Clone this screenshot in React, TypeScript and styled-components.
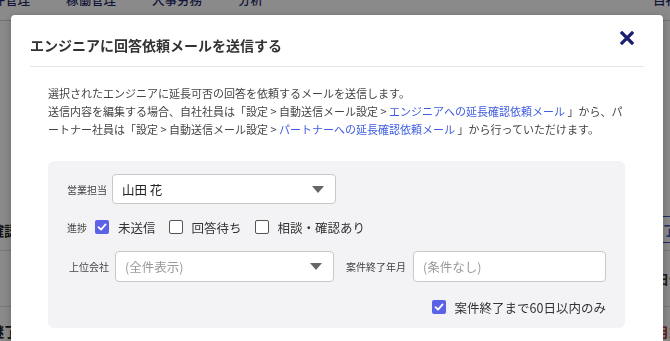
import React from "react";
import styled, { createGlobalStyle } from "styled-components";

const Global = createGlobalStyle`
  html, body { margin: 0; padding: 0; }
  body {
    width: 670px; height: 341px; overflow: hidden; background: #fff;
    font-family: "Noto Sans CJK JP", "Noto Sans", sans-serif; color: #333;
  }
`;

const Page = styled.div`
  width: 670px; height: 341px; overflow: hidden; display: flex; flex-direction: column;
`;

const Header = styled.header`
  height: 20px; flex: none; display: flex; align-items: flex-start; gap: 36px;
  border-bottom: 1px solid #d0d0d0; overflow: hidden;
`;

const NavItem = styled.span<{ $right?: boolean }>`
  font-size: 12.5px; line-height: 14px; margin-top: -7px; color: #1f2a6b; font-weight: 500;
  white-space: nowrap;
  margin-left: ${(p) => (p.$right ? "auto" : "0")};
  margin-right: ${(p) => (p.$right ? "-8px" : "0")};
  &:first-child { margin-left: -20px; }
`;

const Content = styled.main`
  flex: 1; display: flex; flex-direction: column; padding-top: 188px;
`;

const BgRow = styled.div<{ $h: number }>`
  height: ${(p) => p.$h}px; display: flex; align-items: center; justify-content: space-between;
  border-bottom: 1px solid #e0e0e0; flex: none;
`;

const BgLeft = styled.span`
  margin-left: -10px; font-size: 14px; font-weight: 700; color: #222;
`;

const BgRight = styled.span<{ $color: string; $boxed?: boolean }>`
  margin-right: -12px; font-size: 13px; font-weight: 700; color: ${(p) => p.$color};
  padding: ${(p) => (p.$boxed ? "3px 6px" : "0")};
  border-top: ${(p) => (p.$boxed ? "1px solid #3a4fc0" : "none")};
  border-bottom: ${(p) => (p.$boxed ? "1px solid #3a4fc0" : "none")};
`;

const Overlay = styled.div`
  position: fixed; inset: 0; background: rgba(0, 0, 0, 0.46);
`;

const Modal = styled.div`
  position: fixed; top: 15px; left: 11px; width: 652px; height: 400px;
  background: #fff; border-radius: 4px; box-shadow: 0 2px 10px rgba(0,0,0,0.25);
`;

const ModalHeader = styled.div`
  margin: 0 19px; padding: 19px 0 10px; border-bottom: 1px solid #e6e6e6;
  position: relative;
`;

const Title = styled.h2`
  margin: 0; font-size: 14px; line-height: 22px; font-weight: 700; color: #333;
`;

const Close = styled.button`
  position: absolute; right: 8px; top: 14px; width: 18px; height: 18px;
  padding: 0; border: 0; background: none; display: flex; align-items: center; justify-content: center;
`;

const Body = styled.div`
  padding: 17px 38px 0 37px;
`;

const Desc = styled.p`
  margin: 0; font-size: 11px; line-height: 18px; color: #444;
`;

const Link = styled.a`
  color: #3f5ce0; text-decoration: none;
`;

const Panel = styled.div`
  margin-top: 23px; background: #f3f3f6; border-radius: 6px;
  padding: 13px 19px 11px 19px; display: flex; flex-direction: column;
`;

const Row = styled.div<{ $mt?: number; $pl?: number; $end?: boolean }>`
  display: flex; align-items: center;
  margin-top: ${(p) => p.$mt ?? 0}px; padding-left: ${(p) => p.$pl ?? 0}px;
  justify-content: ${(p) => (p.$end ? "flex-end" : "flex-start")};
`;

const Label = styled.span<{ $gap: number; $ml?: number }>`
  font-size: 10px; color: #444; margin-right: ${(p) => p.$gap}px;
  margin-left: ${(p) => p.$ml ?? 0}px; white-space: nowrap;
`;

const Field = styled.div<{ $w: number; $h: number }>`
  width: ${(p) => p.$w}px; height: ${(p) => p.$h}px; box-sizing: border-box;
  background: #fff; border: 1px solid #c8c8c8; border-radius: 4px;
  display: flex; align-items: center; justify-content: space-between;
  padding: 0 11px 0 9px; font-size: 12.5px;
`;

const Value = styled.span<{ $placeholder?: boolean }>`
  color: ${(p) => (p.$placeholder ? "#9a9a9a" : "#222")};
`;

const Caret = styled.span`
  width: 0; height: 0; border-left: 6px solid transparent; border-right: 6px solid transparent;
  border-top: 7px solid #666;
`;

const CheckGroup = styled.div`
  display: flex; align-items: center; gap: 13px; height: 20px;
`;

const CheckItem = styled.label`
  display: flex; align-items: center; gap: 9px; font-size: 12.5px; color: #333;
`;

const Box = styled.span<{ $on: boolean }>`
  width: 14px; height: 14px; box-sizing: border-box; border-radius: 2px;
  background: ${(p) => (p.$on ? "#5b62e6" : "#fff")};
  border: ${(p) => (p.$on ? "none" : "1.5px solid #555")};
  display: flex; align-items: center; justify-content: center;
`;

const Check = ({ on, label }: { on: boolean; label: string }) => (
  <CheckItem>
    <Box $on={on}>
      {on && (
        <svg width="10" height="10" viewBox="0 0 10 10">
          <path d="M1.5 5.2 L4 7.6 L8.6 2.4" fill="none" stroke="#fff" strokeWidth="1.8" strokeLinecap="round" strokeLinejoin="round" />
        </svg>
      )}
    </Box>
    {label}
  </CheckItem>
);

export default function App() {
  return (
    <>
      <Global />
      <Page>
        <Header>
          <NavItem>案件管理</NavItem>
          <NavItem>稼働管理</NavItem>
          <NavItem>人事労務</NavItem>
          <NavItem>分析</NavItem>
          <NavItem $right>自社</NavItem>
        </Header>
        <Content>
          <BgRow $h={41}>
            <BgLeft>確認中</BgLeft>
            <BgRight $color="#3a4fc0" $boxed>終了</BgRight>
          </BgRow>
          <BgRow $h={55}>
            <BgLeft />
            <BgRight $color="#333">日付</BgRight>
          </BgRow>
          <BgRow $h={48}>
            <BgLeft>継了</BgLeft>
            <BgRight $color="#c0392b">月末</BgRight>
          </BgRow>
        </Content>
      </Page>
      <Overlay />
      <Modal>
        <ModalHeader>
          <Title>エンジニアに回答依頼メールを送信する</Title>
          <Close aria-label="閉じる">
            <svg width="14" height="14" viewBox="0 0 14 14">
              <path d="M2 2 L12 12 M12 2 L2 12" stroke="#1c1f6e" strokeWidth="3.2" strokeLinecap="square" />
            </svg>
          </Close>
        </ModalHeader>
        <Body>
          <Desc>
            選択されたエンジニアに延長可否の回答を依頼するメールを送信します。
            <br />
            送信内容を編集する場合、自社社員は「設定 &gt; 自動送信メール設定 &gt; <Link>エンジニアへの延長確認依頼メール</Link> 」から、パートナー社員は「設定 &gt; 自動送信メール設定 &gt; <Link>パートナーへの延長確認依頼メール</Link> 」から行っていただけます。
          </Desc>
          <Panel>
            <Row>
              <Label $gap={5}>営業担当</Label>
              <Field $w={224} $h={30}>
                <Value>山田 花</Value>
                <Caret />
              </Field>
            </Row>
            <Row $mt={13}>
              <Label $gap={8}>進捗</Label>
              <CheckGroup>
                <Check on label="未送信" />
                <Check on={false} label="回答待ち" />
                <Check on={false} label="相談・確認あり" />
              </CheckGroup>
            </Row>
            <Row $mt={14} $pl={2}>
              <Label $gap={6}>上位会社</Label>
              <Field $w={220} $h={31}>
                <Value $placeholder>(全件表示)</Value>
                <Caret />
              </Field>
              <Label $gap={7} $ml={12}>案件終了年月</Label>
              <Field $w={194} $h={31}>
                <Value $placeholder>(条件なし)</Value>
              </Field>
            </Row>
            <Row $mt={15} $end>
              <CheckGroup>
                <Check on label="案件終了まで60日以内のみ" />
              </CheckGroup>
            </Row>
          </Panel>
        </Body>
      </Modal>
    </>
  );
}
